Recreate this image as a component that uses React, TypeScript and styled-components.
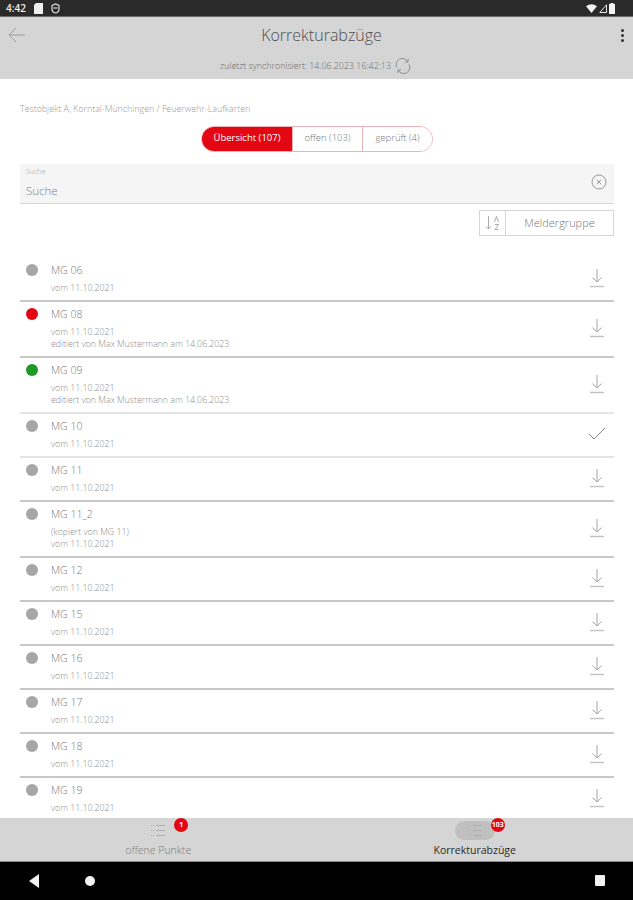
import styled, { createGlobalStyle } from 'styled-components';

const GlobalStyle = createGlobalStyle`
    html, body {
        margin: 0;
        padding: 0;
        background: #fff;
    }
    body {
        font-family: "Open Sans", "Liberation Sans", sans-serif;
        font-weight: 300;
    }
`;

type Status = 'none' | 'red' | 'green';

interface Item {
    name: string;
    copied?: string;
    edited?: boolean;
    status?: Status;
    done?: boolean;
    light?: boolean;
}

const items: Item[] = [
    { name: 'MG 06' },
    { name: 'MG 08', status: 'red', edited: true },
    { name: 'MG 09', status: 'green', edited: true, light: true },
    { name: 'MG 10', done: true, light: true },
    { name: 'MG 11' },
    { name: 'MG 11_2', copied: '(kopiert von MG 11)' },
    { name: 'MG 12' },
    { name: 'MG 15' },
    { name: 'MG 16' },
    { name: 'MG 17' },
    { name: 'MG 18' },
    { name: 'MG 19' },
];

const statusColors: Record<Status, string> = {
    none: '#a6a6a6',
    red: '#e30613',
    green: '#1f9a27',
};

const DownloadIcon = () => (
    <svg width="16" height="20" viewBox="0 0 16 20" fill="none" stroke="#a6a6a6" strokeWidth="1">
        <path d="M8 1v13M3.500 9.500L8 14l4.500-4.500" />
        <path d="M1 18.500h14" stroke="#c4c4c4" strokeWidth="1.5" />
    </svg>
);

const CheckIcon = () => (
    <svg width="18" height="14" viewBox="0 0 18 14" fill="none" stroke="#8a8a8a" strokeWidth="1">
        <path d="M1 7l5 5L17 1" />
    </svg>
);

const ListIcon = () => (
    <svg width="14" height="13" viewBox="0 0 14 13" fill="none" stroke="#b0b0b0" strokeWidth="1">
        <path d="M5 1.500h9M5 6.500h9M5 11.500h9" />
        <path d="M0 1.500h3M0 6.500h3M0 11.500h3" strokeDasharray="1 1" />
    </svg>
);

export default function App() {
    return (
        <>
            <GlobalStyle />
            <Page>
                <StatusBar>
                    <StatusLeft>
                        <Clock>4:42</Clock>
                        <svg width="9" height="11" viewBox="0 0 9 11" fill="#eee">
                            <path d="M2 0h7v11H0V2z" />
                        </svg>
                        <svg width="9" height="11" viewBox="0 0 9 11" fill="none" stroke="#ddd" strokeWidth="1.2">
                            <path d="M1 2.500L4.500 1 8 2.500V6c0 2-1.500 3.500-3.500 4C2.500 9.500 1 8 1 6z" />
                            <path d="M2.500 5h4" />
                        </svg>
                    </StatusLeft>
                    <StatusRight>
                        <svg width="11" height="9" viewBox="0 0 11 9" fill="#f2f2f2">
                            <path d="M0 2.200Q5.500-1.800 11 2.200L5.500 9z" />
                        </svg>
                        <svg width="8" height="9" viewBox="0 0 8 9" fill="none" stroke="#e6e6e6">
                            <path d="M7.500 .8v7.700H.8z" />
                        </svg>
                        <svg width="6" height="11" viewBox="0 0 6 11" fill="#f2f2f2">
                            <path d="M1.500 1V0h3v1H6v10H0V1z" />
                        </svg>
                    </StatusRight>
                </StatusBar>

                <Header>
                    <TitleRow>
                        <BackButton>
                            <svg width="18" height="16" viewBox="0 0 18 16" fill="none" stroke="#9c9c9c" strokeWidth="1">
                                <path d="M17 8H1M8 1L1 8l7 7" />
                            </svg>
                        </BackButton>
                        <PageTitle>Korrekturabzüge</PageTitle>
                        <MoreButton>
                            <Dot />
                            <Dot />
                            <Dot />
                        </MoreButton>
                    </TitleRow>
                    <SyncRow>
                        zuletzt synchronisiert: 14.06.2023 16:42:13
                        <svg width="16" height="16" viewBox="0 0 16 16" fill="none" stroke="#858585" strokeWidth="0.9">
                            <path d="M2 9.500A6 6 0 0 1 12.500 3.500M14 6.500A6 6 0 0 1 3.500 12.500" />
                            <path d="M13 1v3h-3M3 15v-3h3" />
                        </svg>
                    </SyncRow>
                </Header>

                <Content>
                    <Breadcrumb>Testobjekt A, Korntal-Münchingen / Feuerwehr-Laufkarten</Breadcrumb>

                    <Tabs>
                        <Tab $active $width={90}>Übersicht (107)</Tab>
                        <Tab $width={69}>offen (103)</Tab>
                        <Tab $width={69}>geprüft (4)</Tab>
                    </Tabs>

                    <SearchBox>
                        <SearchLabel>Suche</SearchLabel>
                        <SearchValue>Suche</SearchValue>
                        <ClearIcon>
                            <svg width="16" height="16" viewBox="0 0 16 16" fill="none" stroke="#8c8c8c" strokeWidth="0.9">
                                <circle cx="8" cy="8" r="7" />
                                <path d="M5.800 5.800l4.400 4.400M10.200 5.800l-4.400 4.400" />
                            </svg>
                        </ClearIcon>
                    </SearchBox>

                    <SortRow>
                        <SortIconBox>
                            <svg width="16" height="16" viewBox="0 0 16 16" fill="none" stroke="#a0a0a0" strokeWidth="0.9">
                                <path d="M3.500 1v13M1 11.500l2.500 2.500L6 11.500" />
                                <path d="M9.500 7l2-5.500 2 5.500M10 9.500h3.500l-3.500 5h3.500" />
                            </svg>
                        </SortIconBox>
                        <SortLabel>Meldergruppe</SortLabel>
                    </SortRow>

                    <List>
                        {items.map((item) => (
                            <Row key={item.name} $light={item.light}>
                                <StatusDot $color={statusColors[item.status ?? 'none']} />
                                <RowText>
                                    <RowTitle>{item.name}</RowTitle>
                                    {item.copied && <RowMeta>{item.copied}</RowMeta>}
                                    <RowMeta>vom 11.10.2021</RowMeta>
                                    {item.edited && <RowMeta>editiert von Max Mustermann am 14.06.2023</RowMeta>}
                                </RowText>
                                <RowAction>{item.done ? <CheckIcon /> : <DownloadIcon />}</RowAction>
                            </Row>
                        ))}
                    </List>
                </Content>

                <BottomNav>
                    <NavItem>
                        <NavIconWrap>
                            <ListIcon />
                            <Badge>1</Badge>
                        </NavIconWrap>
                        <NavLabel>offene Punkte</NavLabel>
                    </NavItem>
                    <NavItem>
                        <NavIconWrap $active>
                            <ListIcon />
                            <Badge>103</Badge>
                        </NavIconWrap>
                        <NavLabel $active>Korrekturabzüge</NavLabel>
                    </NavItem>
                </BottomNav>

                <SystemBar>
                    <SystemLeft>
                        <svg width="12" height="14" viewBox="0 0 12 14" fill="#f2f2f2">
                            <path d="M11 0v14L1 7z" />
                        </svg>
                        <HomeDot />
                    </SystemLeft>
                    <RecentSquare />
                </SystemBar>
            </Page>
        </>
    );
}

const Page = styled.div`
    display: flex;
    flex-direction: column;
    width: 633px;
    height: 900px;
    overflow: hidden;
    background: #fff;
`;

const StatusBar = styled.div`
    display: flex;
    flex: none;
    align-items: center;
    justify-content: space-between;
    height: 16px;
    padding: 0 18px 0 6px;
    background: #2a2a2a;
    border-bottom: 1px solid #6b6b6b;
`;

const StatusLeft = styled.div`
    display: flex;
    align-items: center;
    gap: 8px;
`;

const StatusRight = styled.div`
    display: flex;
    align-items: center;
    gap: 2px;
`;

const Clock = styled.span`
    color: #f2f2f2;
    font-size: 10px;
    font-weight: 600;
`;

const Header = styled.div`
    display: flex;
    flex: none;
    flex-direction: column;
    height: 62px;
    background: #d5d5d5;
`;

const TitleRow = styled.div`
    display: flex;
    align-items: center;
    justify-content: space-between;
    height: 36px;
    padding: 0 8px;
`;

const BackButton = styled.div`
    display: flex;
    width: 18px;
`;

const PageTitle = styled.div`
    margin-left: 10px;
    color: #4f4f4f;
    font-size: 16px;
    font-weight: 300;
`;

const MoreButton = styled.div`
    display: flex;
    flex-direction: column;
    gap: 2px;
    align-items: flex-end;
    width: 18px;
    padding-right: 1px;
    box-sizing: border-box;
`;

const Dot = styled.span`
    width: 3px;
    height: 3px;
    border-radius: 50%;
    background: #333;
`;

const SyncRow = styled.div`
    display: flex;
    align-items: center;
    justify-content: center;
    gap: 4px;
    height: 25px;
    padding-right: 2px;
    color: #6e6e6e;
    font-size: 8.9px;
`;

const Content = styled.div`
    display: flex;
    flex: 1;
    flex-direction: column;
    min-height: 0;
    padding: 23px 19px 0 20px;
    overflow: hidden;
`;

const Breadcrumb = styled.div`
    flex: none;
    height: 13px;
    color: #9a9a9a;
    font-size: 8.9px;
    line-height: 13px;
`;

const Tabs = styled.div`
    display: flex;
    flex: none;
    align-self: center;
    margin-top: 11px;
    border: 1px solid #eeb3b8;
    border-radius: 13px;
    overflow: hidden;
`;

const Tab = styled.div<{ $active?: boolean; $width: number }>`
    width: ${(p) => p.$width}px;
    height: 24px;
    background: ${(p) => (p.$active ? '#e30613' : '#fff')};
    color: ${(p) => (p.$active ? '#fff' : '#777')};
    font-size: 9.5px;
    font-weight: ${(p) => (p.$active ? 400 : 300)};
    line-height: 22px;
    text-align: center;

    & + & {
        border-left: 1px solid #eeb3b8;
    }
`;

const SearchBox = styled.div`
    position: relative;
    display: flex;
    flex: none;
    flex-direction: column;
    height: 40px;
    margin-top: 12px;
    padding: 3px 6px 0;
    box-sizing: border-box;
    background: #f5f5f5;
    border-bottom: 1px solid #d8d8d8;
`;

const SearchLabel = styled.div`
    color: #a0a0a0;
    font-size: 7px;
    line-height: 10px;
`;

const SearchValue = styled.div`
    margin-top: 6px;
    color: #808080;
    font-size: 11.5px;
    line-height: 16px;
`;

const ClearIcon = styled.div`
    position: absolute;
    top: 10px;
    right: 7px;
    display: flex;
`;

const SortRow = styled.div`
    display: flex;
    flex: none;
    align-self: flex-end;
    height: 26px;
    margin-top: 6px;
    border: 1px solid #d6d6d6;
    box-sizing: border-box;
`;

const SortIconBox = styled.div`
    display: flex;
    align-items: center;
    justify-content: center;
    width: 25px;
    border-right: 1px solid #d6d6d6;
`;

const SortLabel = styled.div`
    width: 107px;
    color: #777;
    font-size: 11px;
    font-weight: 300;
    line-height: 24px;
    text-align: center;
`;

const List = styled.div`
    display: flex;
    flex-direction: column;
    margin-top: 22px;
`;

const Row = styled.div<{ $light?: boolean }>`
    display: flex;
    flex: none;
    padding: 4px 0 0 6px;
    box-sizing: border-box;
    border-bottom: 2px solid ${(p) => (p.$light ? '#e4e4e4' : '#c8c8c8')};
`;

const StatusDot = styled.span<{ $color: string }>`
    flex: none;
    width: 12px;
    height: 12px;
    margin-top: 2px;
    border-radius: 50%;
    background: ${(p) => p.$color};
`;

const RowText = styled.div`
    display: flex;
    flex: 1;
    flex-direction: column;
    padding: 0 0 6px 13px;
`;

const RowTitle = styled.div`
    margin-bottom: 4px;
    color: #7a7a7a;
    font-size: 10.5px;
    line-height: 16px;
`;

const RowMeta = styled.div`
    color: #8c8c8c;
    font-size: 8.8px;
    line-height: 12px;
`;

const RowAction = styled.div`
    display: flex;
    flex: none;
    align-items: center;
    justify-content: center;
    width: 18px;
    margin: 0 8px 6px 0;
`;

const BottomNav = styled.div`
    display: flex;
    flex: none;
    height: 44px;
    background: #d5d5d5;
    border-bottom: 1px solid #8a8a8a;
    box-sizing: border-box;
`;

const NavItem = styled.div`
    display: flex;
    flex: 1;
    flex-direction: column;
    align-items: center;
    padding-top: 3px;
`;

const NavIconWrap = styled.div<{ $active?: boolean }>`
    position: relative;
    display: flex;
    align-items: center;
    justify-content: center;
    width: 40px;
    height: 19px;
    border-radius: 10px;
    background: ${(p) => (p.$active ? '#c0c0c0' : 'transparent')};
`;

const Badge = styled.span`
    position: absolute;
    top: -3px;
    left: 36px;
    min-width: 12px;
    height: 14px;
    padding: 0 1px;
    border-radius: 7px;
    background: #e30613;
    color: #fff;
    font-size: 7px;
    font-weight: 700;
    line-height: 14px;
    text-align: center;
`;

const NavLabel = styled.div<{ $active?: boolean }>`
    margin-top: 3px;
    color: ${(p) => (p.$active ? '#2b2b2b' : '#7d7d7d')};
    font-size: 10.5px;
    font-weight: ${(p) => (p.$active ? 400 : 300)};
    line-height: 15px;
`;

const SystemBar = styled.div`
    display: flex;
    flex: none;
    align-items: center;
    justify-content: space-between;
    height: 38px;
    padding: 0 28px 1px 28px;
    box-sizing: border-box;
    background: #000;
`;

const SystemLeft = styled.div`
    display: flex;
    align-items: center;
    gap: 45px;
`;

const HomeDot = styled.span`
    width: 10px;
    height: 10px;
    border-radius: 50%;
    background: #f2f2f2;
`;

const RecentSquare = styled.span`
    width: 10px;
    height: 11px;
    border-radius: 1px;
    background: #f2f2f2;
`;
